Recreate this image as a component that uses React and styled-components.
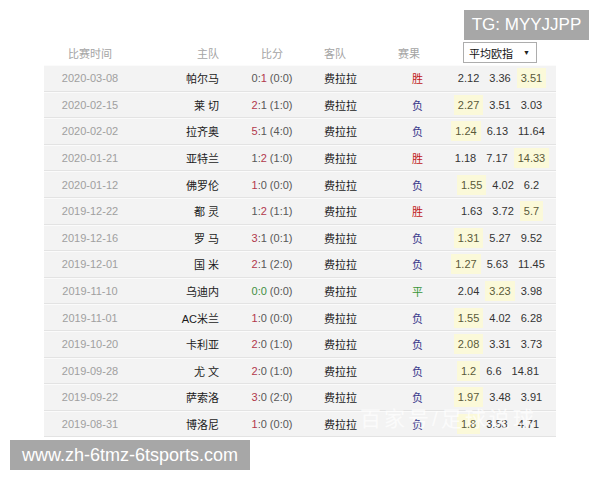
import React from 'react';
import styled, { createGlobalStyle } from 'styled-components';

const Global = createGlobalStyle`
  html, body { margin: 0; padding: 0; background: #fff; }
  body { font-family: "Liberation Sans", Arial, "Noto Sans CJK SC", sans-serif; }
`;

const CJK = '"Liberation Sans", Arial, "Noto Sans CJK SC", sans-serif';

const Page = styled.div`
  position: relative;
  width: 600px;
  height: 480px;
  box-sizing: border-box;
  padding: 40px 0 0 44px;
  overflow: hidden;
  background: #fff;
`;

const Table = styled.div`
  width: 512px;
  display: flex;
  flex-direction: column;
`;

const cols = '92px 84px 104px 74px 46px 112px';

const HeaderRow = styled.div`
  display: grid;
  grid-template-columns: ${cols};
  height: 25px;
  align-items: center;
  font-family: ${CJK};
  font-size: 11px;
  color: #a4a4a4;
`;

const HeadCell = styled.div`
  text-align: ${p => p.$align || 'left'};
  padding-right: ${p => (p.$align === 'right' ? '1px' : '0')};
  display: flex;
  justify-content: ${p => (p.$align === 'center' ? 'center' : p.$align === 'right' ? 'flex-end' : 'flex-start')};
`;

const Select = styled.div`
  width: 74px;
  height: 21px;
  box-sizing: border-box;
  border: 1px solid #adadad;
  background: #fff;
  display: flex;
  align-items: center;
  justify-content: space-between;
  padding: 0 5px 0 5px;
  color: #111;
  font-size: 11px;
`;

const Caret = styled.span`
  font-size: 7px;
  color: #222;
  margin-right: 1px;
`;

const Row = styled.div`
  display: grid;
  grid-template-columns: ${cols};
  height: 26.6px;
  box-sizing: border-box;
  align-items: center;
  background: #f3f3f3;
  border-top: 1px solid #fbfbfb;
  border-bottom: 1px solid #e3e3e3;
  font-size: 11px;
`;

const DateCell = styled.div`
  text-align: center;
  color: #a0a0a0;
`;

const HomeCell = styled.div`
  text-align: right;
  padding-right: 1px;
  color: #1a1a1a;
  white-space: pre;
`;

const ScoreCell = styled.div`
  text-align: center;
  color: #585858;
  white-space: pre;
`;

const Num = styled.span`
  color: ${p => (p.$tone === 'win' ? '#b2384c' : p.$tone === 'draw' ? '#3f8f3f' : '#585858')};
`;

const AwayCell = styled.div`
  color: #1a1a1a;
`;

const ResultCell = styled.div`
  padding-left: 14px;
  color: ${p => (p.$r === '胜' ? '#c01818' : p.$r === '平' ? '#3a963a' : '#3a3a8c')};
`;

const OddsCell = styled.div`
  display: flex;
  justify-content: center;
  align-items: center;
  gap: 2px;
  color: #333;
`;

const Odd = styled.span`
  display: inline-flex;
  align-items: center;
  height: 20px;
  padding: 0 4px;
  background: ${p => (p.$hl ? '#fbf9d9' : 'transparent')};
  color: ${p => (p.$hl ? '#5a5a3a' : '#333')};
`;

const TopMark = styled.div`
  position: absolute;
  left: 464px;
  top: 10px;
  width: 125px;
  height: 30px;
  background: #a7a7a7;
  color: #fff;
  font-size: 17px;
  display: flex;
  align-items: center;
  justify-content: center;
`;

const BottomMark = styled.div`
  position: absolute;
  left: 10px;
  top: 440px;
  width: 240px;
  height: 30px;
  background: #a7a7a7;
  color: #fff;
  font-size: 18px;
  display: flex;
  align-items: center;
  justify-content: center;
`;

const FaintMark = styled.div`
  position: absolute;
  left: 360px;
  top: 402px;
  color: rgba(255, 255, 255, 0.7);
  font-family: ${CJK};
  font-size: 21px;
  letter-spacing: 3px;
  pointer-events: none;
`;

const data = [
  ['2020-03-08', '帕尔马', [0, 1, 0, 0], 'a', '胜', ['2.12', '3.36', '3.51'], 2],
  ['2020-02-15', '莱 切', [2, 1, 1, 0], 'h', '负', ['2.27', '3.51', '3.03'], 0],
  ['2020-02-02', '拉齐奥', [5, 1, 4, 0], 'h', '负', ['1.24', '6.13', '11.64'], 0],
  ['2020-01-21', '亚特兰', [1, 2, 1, 0], 'a', '胜', ['1.18', '7.17', '14.33'], 2],
  ['2020-01-12', '佛罗伦', [1, 0, 0, 0], 'h', '负', ['1.55', '4.02', '6.2'], 0],
  ['2019-12-22', '都 灵', [1, 2, 1, 1], 'a', '胜', ['1.63', '3.72', '5.7'], 2],
  ['2019-12-16', '罗 马', [3, 1, 0, 1], 'h', '负', ['1.31', '5.27', '9.52'], 0],
  ['2019-12-01', '国 米', [2, 1, 2, 0], 'h', '负', ['1.27', '5.63', '11.45'], 0],
  ['2019-11-10', '乌迪内', [0, 0, 0, 0], 'd', '平', ['2.04', '3.23', '3.98'], 1],
  ['2019-11-01', 'AC米兰', [1, 0, 0, 0], 'h', '负', ['1.55', '4.02', '6.28'], 0],
  ['2019-10-20', '卡利亚', [2, 0, 1, 0], 'h', '负', ['2.08', '3.31', '3.73'], 0],
  ['2019-09-28', '尤 文', [2, 0, 1, 0], 'h', '负', ['1.2', '6.6', '14.81'], 0],
  ['2019-09-22', '萨索洛', [3, 0, 2, 0], 'h', '负', ['1.97', '3.48', '3.91'], 0],
  ['2019-08-31', '博洛尼', [1, 0, 0, 0], 'h', '负', ['1.8', '3.53', '4.71'], 0],
];

function Score({ s, w }) {
  const [h, a, hh, ha] = s;
  const toneH = w === 'h' ? 'win' : w === 'd' ? 'draw' : '';
  const toneA = w === 'a' ? 'win' : w === 'd' ? 'draw' : '';
  return (
    <ScoreCell>
      <Num $tone={toneH}>{h}</Num>
      <Num $tone={w === 'd' ? 'draw' : ''}>:</Num>
      <Num $tone={toneA}>{a}</Num>
      {` (${hh}:${ha})`}
    </ScoreCell>
  );
}

export default function App() {
  return (
    <>
      <Global />
      <Page>
        <Table>
          <HeaderRow>
            <HeadCell $align="center">比赛时间</HeadCell>
            <HeadCell $align="right">主队</HeadCell>
            <HeadCell $align="center">比分</HeadCell>
            <HeadCell>客队</HeadCell>
            <HeadCell>赛果</HeadCell>
            <HeadCell $align="center">
              <Select>
                <span>平均欧指</span>
                <Caret>▼</Caret>
              </Select>
            </HeadCell>
          </HeaderRow>
          {data.map(([date, home, score, w, res, odds, hl]) => (
            <Row key={date}>
              <DateCell>{date}</DateCell>
              <HomeCell>{home}</HomeCell>
              <Score s={score} w={w} />
              <AwayCell>费拉拉</AwayCell>
              <ResultCell $r={res}>{res}</ResultCell>
              <OddsCell>
                {odds.map((o, i) => (
                  <Odd key={i} $hl={i === hl}>{o}</Odd>
                ))}
              </OddsCell>
            </Row>
          ))}
        </Table>
        <FaintMark>百家号/足球说球</FaintMark>
        <TopMark>TG: MYYJJPP</TopMark>
        <BottomMark>www.zh-6tmz-6tsports.com</BottomMark>
      </Page>
    </>
  );
}
